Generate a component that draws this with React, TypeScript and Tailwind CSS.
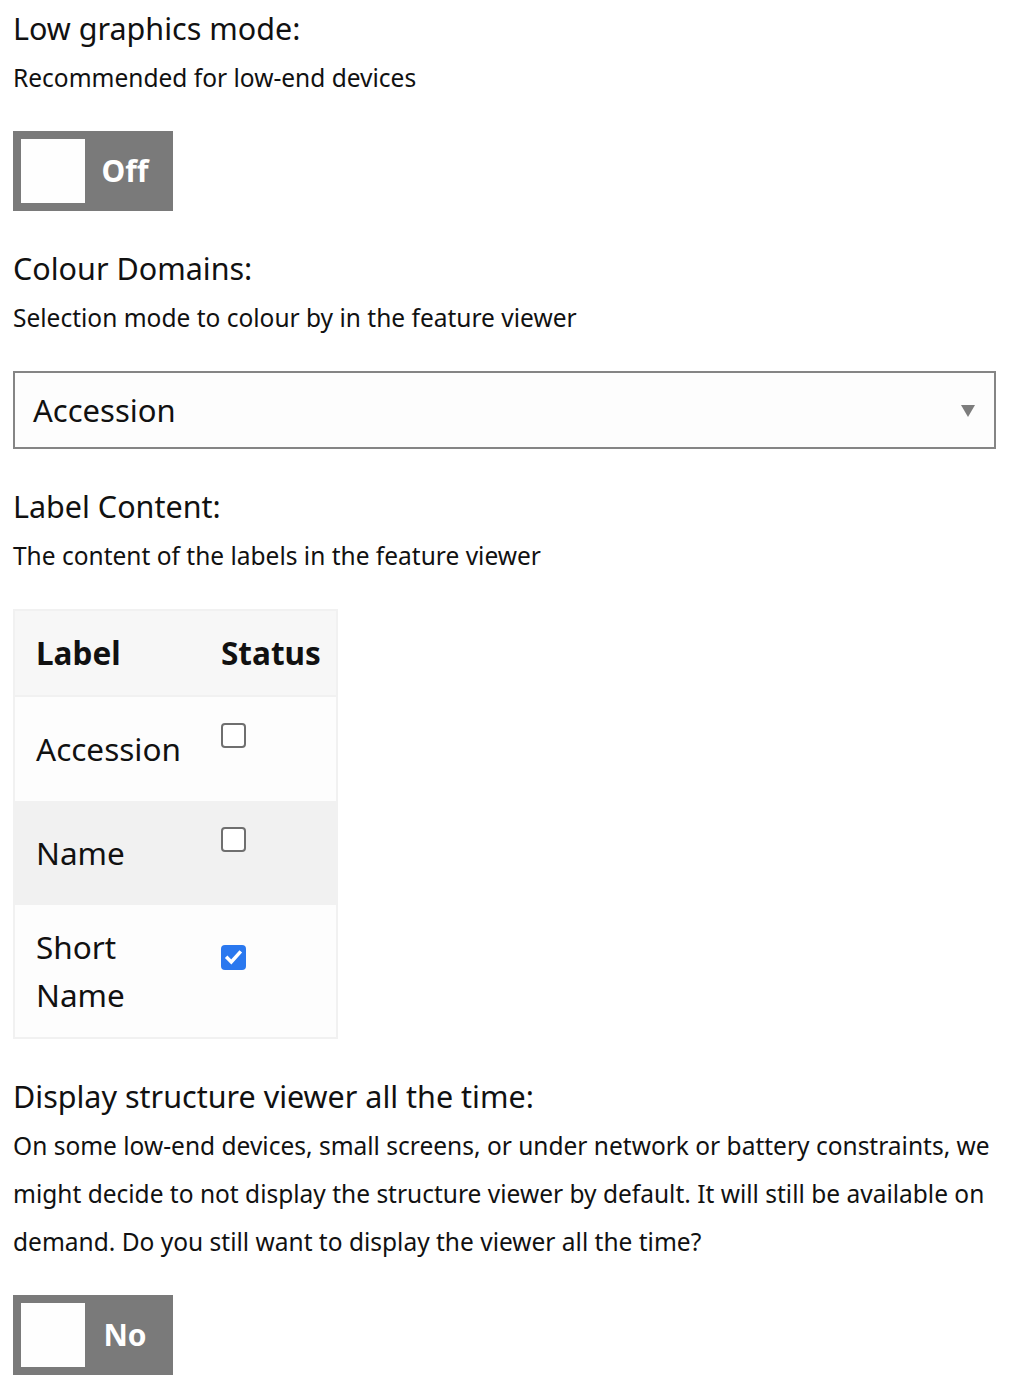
import { useState } from 'react'

function Toggle({ label }: { label: string }) {
    return (
        <button className="flex items-center w-[160px] h-[80px] bg-[#7a7a7a] p-[8px] text-left">
            <span className="w-[64px] h-[64px] bg-[#fefefe]" />
            <span className="flex-1 text-center text-white font-bold text-[30px] leading-none">{label}</span>
        </button>
    )
}

function Checkbox({ checked }: { checked: boolean }) {
    if (checked) {
        return (
            <span className="flex items-center justify-center w-[25px] h-[25px] rounded-[4px] bg-[#2a78ef]">
                <svg viewBox="0 0 24 24" className="w-[21px] h-[21px]" fill="none" stroke="white" strokeWidth="4" strokeLinecap="square">
                    <path d="M5 12.5l4.5 4.5L19 6.5" />
                </svg>
            </span>
        )
    }
    return <span className="block w-[25px] h-[25px] rounded-[4px] border-2 border-[#6f6f6f] bg-white" />
}

function Section({ title, desc, children }: { title: string; desc: React.ReactNode; children: React.ReactNode }) {
    return (
        <section className="mb-[33px]">
            <h2 className="text-[30.5px] leading-[48px] text-[#111]">{title}</h2>
            <p className="mt-[2px] text-[24.5px] leading-[48px] text-[#111]">{desc}</p>
            <div className="mt-[29px]">{children}</div>
        </section>
    )
}

export default function App() {
    const [labels] = useState([
        { name: 'Accession', checked: false, height: 'h-[104px]', pad: 'pt-[26px]', bg: 'bg-[#fdfdfd]' },
        { name: 'Name', checked: false, height: 'h-[104px]', pad: 'pt-[26px]', bg: 'bg-[#f1f1f1]' },
        { name: 'Short Name', checked: true, height: 'h-[132px]', pad: 'pt-[40px]', bg: 'bg-[#fdfdfd]' },
    ])

    return (
        <div className="w-[1010px] bg-white px-[13px] pt-[4px] font-['Noto_Sans',sans-serif]">
            <Section title="Low graphics mode:" desc="Recommended for low-end devices">
                <Toggle label="Off" />
            </Section>

            <Section title="Colour Domains:" desc="Selection mode to colour by in the feature viewer">
                <div className="relative flex items-center h-[78px] w-[983px] border-2 border-[#858585] bg-[#fdfdfd] px-[18px]">
                    <span className="text-[31px] text-[#111]">Accession</span>
                    <svg viewBox="0 0 14 12" className="absolute right-[19px] top-[32px] w-[14px] h-[12px]">
                        <path d="M0 0h14L7 12z" fill="#7d7d7d" />
                    </svg>
                </div>
            </Section>

            <Section title="Label Content:" desc="The content of the labels in the feature viewer">
                <table className="w-[325px] border-2 border-[#f1f1f1] border-separate border-spacing-0 text-[31.5px] text-[#111]">
                    <thead>
                        <tr className="bg-[#f7f7f7]">
                            <th className="w-[206px] h-[86px] pl-[21px] py-0 border-b-2 border-[#f1f1f1] text-left font-bold">Label</th>
                            <th className="h-[86px] py-0 border-b-2 border-[#f1f1f1] text-left font-bold">Status</th>
                        </tr>
                    </thead>
                    <tbody>
                        {labels.map(l => (
                            <tr key={l.name} className={l.bg}>
                                <td className={`${l.height} w-[206px] pl-[21px] pr-[20px] py-0 leading-[48px] align-middle`}>{l.name}</td>
                                <td className={`${l.height} ${l.pad} align-top`}>
                                    <Checkbox checked={l.checked} />
                                </td>
                            </tr>
                        ))}
                    </tbody>
                </table>
            </Section>

            <section>
                <h2 className="text-[30.5px] leading-[48px] text-[#111]">Display structure viewer all the time:</h2>
                <p className="mt-[2px] text-[24.5px] leading-[48px] text-[#111]">
                    On some low-end devices, small screens, or under network or battery constraints, we might decide to not display the structure viewer by default. It will still be available on demand. Do you still want to display the viewer all the time?
                </p>
                <div className="mt-[29px] pb-[5px]">
                    <Toggle label="No" />
                </div>
            </section>
        </div>
    )
}
